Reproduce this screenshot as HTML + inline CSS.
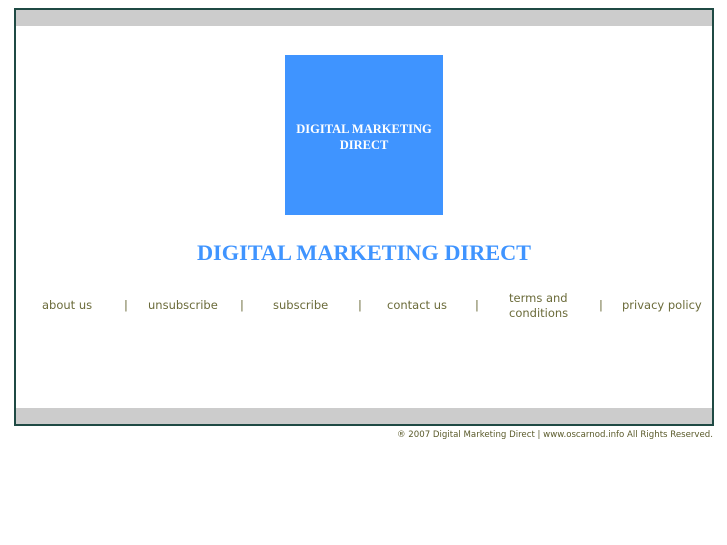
<!DOCTYPE html>
<html><head><style>
body{margin:0;background:#fff;font-family:"DejaVu Sans","Liberation Sans",sans-serif;}
#frame{position:absolute;left:14px;top:8px;width:696px;height:414px;border:2px solid #1f4a44;background:#fff;}
.bar{position:absolute;left:0;width:696px;height:16px;background:#cccccc;}
#logo{position:absolute;left:269px;top:45px;width:158px;height:160px;background:#3f94ff;color:#fff;font-family:"Liberation Serif",serif;font-weight:bold;font-size:12.5px;text-align:center;line-height:16px;padding-top:66px;box-sizing:border-box;}
#title{position:absolute;left:0;width:696px;top:230px;text-align:center;color:#3f94ff;font-family:"Liberation Serif",serif;font-weight:bold;font-size:22.3px;}
.n{position:absolute;font-size:11.5px;color:#6b6b3a;text-align:center;line-height:15px;}
#foot{position:absolute;right:14px;top:430px;font-size:8.6px;color:#5a5a2a;}
</style></head><body>
<div id="frame">
<div class="bar" style="top:0"></div>
<div id="logo">DIGITAL MARKETING<br>DIRECT</div>
<div id="title">DIGITAL MARKETING DIRECT</div>
<div class="bar" style="top:398px"></div>
</div>
<div class="n" style="left:42px;top:298px">about us</div>
<div class="n" style="left:124px;top:298px">|</div>
<div class="n" style="left:148px;top:298px">unsubscribe</div>
<div class="n" style="left:240px;top:298px">|</div>
<div class="n" style="left:273px;top:298px">subscribe</div>
<div class="n" style="left:358px;top:298px">|</div>
<div class="n" style="left:387px;top:298px">contact us</div>
<div class="n" style="left:475px;top:298px">|</div>
<div class="n" style="left:509px;top:291px;text-align:left">terms and<br>conditions</div>
<div class="n" style="left:599px;top:298px">|</div>
<div class="n" style="left:622px;top:298px">privacy policy</div>
<div id="foot">® 2007 Digital Marketing Direct | www.oscarnod.info All Rights Reserved.</div>
</body></html>
